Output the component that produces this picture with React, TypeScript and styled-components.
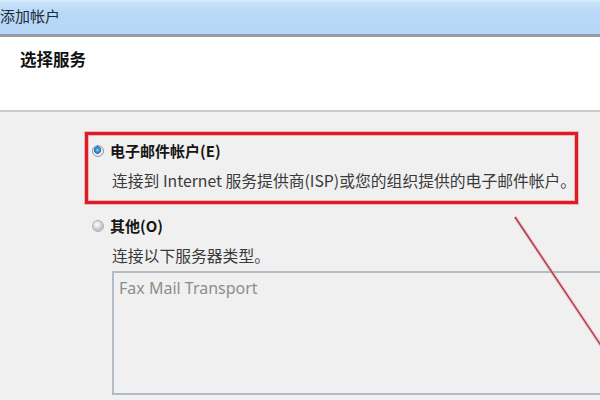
import styled, { createGlobalStyle } from "styled-components";

const CJK = `"Noto Sans CJK SC", "Noto Sans", sans-serif`;

const GlobalStyle = createGlobalStyle`
  html, body {
    margin: 0;
    padding: 0;
    width: 600px;
    height: 400px;
    overflow: hidden;
    background: #f0f0f0;
  }
`;

interface OptionProps {
  label: string;
  description: string;
  checked?: boolean;
  highlighted?: boolean;
  children?: React.ReactNode;
}

const Option = ({ label, description, checked, highlighted, children }: OptionProps) => (
  <OptionGroup $highlighted={highlighted}>
    <RadioRow>
      <Radio $checked={checked} />
      <OptionLabel>{label}</OptionLabel>
    </RadioRow>
    <Description>{description}</Description>
    {children}
  </OptionGroup>
);

const App = () => (
  <>
    <GlobalStyle />
    <Window>
      <TitleBar>
        <Title>添加帐户</Title>
      </TitleBar>
      <Header>
        <Heading>选择服务</Heading>
      </Header>
      <Body>
        <Option
          checked
          highlighted
          label="电子邮件帐户(E)"
          description="连接到 Internet 服务提供商(ISP)或您的组织提供的电子邮件帐户。"
        />
        <Option label="其他(O)" description="连接以下服务器类型。">
          <ListBox>
            <ListItem>Fax Mail Transport</ListItem>
          </ListBox>
        </Option>
      </Body>
      <Annotation width="600" height="400" viewBox="0 0 600 400">
        <line x1="515" y1="217" x2="602" y2="347" stroke="#f4a0a8" strokeWidth="3.5" opacity="0.5" />
        <line x1="515" y1="217" x2="602" y2="347" stroke="#a8404c" strokeWidth="1.5" />
      </Annotation>
    </Window>
  </>
);

export default App;

const Window = styled.div`
  position: relative;
  width: 600px;
  height: 400px;
  overflow: hidden;
  display: flex;
  flex-direction: column;
  background: #f0f0f0;
`;

const TitleBar = styled.div`
  height: 34px;
  flex-shrink: 0;
  display: flex;
  align-items: center;
  background: linear-gradient(180deg, #dbeffc 0px, #c6e2fa 3px, #b9d9f8 12px, #b6d7f8 100%);
  border-bottom: 3px solid #959ba2;
`;

const Title = styled.span`
  margin-left: 0;
  margin-top: -4px;
  font-family: ${CJK};
  font-size: 15px;
  color: #1e2a36;
`;

const Header = styled.div`
  height: 75px;
  flex-shrink: 0;
  background: #ffffff;
  border-bottom: 2px solid #cbcbcb;
  padding: 10px 0 0 20px;
  box-sizing: border-box;
`;

const Heading = styled.h1`
  margin: 0;
  font-family: ${CJK};
  font-size: 16.5px;
  line-height: 24px;
  font-weight: 700;
  color: #111;
`;

const Body = styled.div`
  flex: 1;
  display: flex;
  flex-direction: column;
  gap: 3px;
  padding: 20px 0 0 85px;
`;

const OptionGroup = styled.div<{ $highlighted?: boolean }>`
  width: 493px;
  box-sizing: border-box;
  display: flex;
  flex-direction: column;
  padding: 6px 8px 10px 3px;
  border: 3px solid ${({ $highlighted }) => ($highlighted ? "#dc1c26" : "transparent")};
  box-shadow: ${({ $highlighted }) =>
    $highlighted ? "0 0 0 1px rgba(240, 130, 135, 0.55), inset 0 0 0 1px rgba(240, 130, 135, 0.55)" : "none"};
`;

const RadioRow = styled.div`
  display: flex;
  align-items: center;
  gap: 6px;
  height: 20px;
`;

const Radio = styled.span<{ $checked?: boolean }>`
  width: 12px;
  height: 12px;
  border-radius: 50%;
  box-sizing: border-box;
  margin-left: 1px;
  border: 1px solid ${({ $checked }) => ($checked ? "#8e9aa6" : "#adadad")};
  background: ${({ $checked }) =>
    $checked
      ? "radial-gradient(circle at 45% 40%, #8fd0f5 0px, #2f86c8 2.5px, #2a6fae 3.5px, #e6eef4 4px)"
      : "radial-gradient(circle at 40% 35%, #ffffff 0px, #e0e0e0 3px, #c8c8c8 5px)"};
`;

const OptionLabel = styled.span`
  font-family: ${CJK};
  font-size: 15px;
  font-weight: 700;
  line-height: 20px;
  color: #151515;
`;

const Description = styled.div`
  margin: 10px 0 0 21px;
  font-family: ${CJK};
  font-size: 15.8px;
  line-height: 20px;
  color: #3a3a3a;
  white-space: nowrap;
`;

const ListBox = styled.div`
  margin: 5px 0 0 21px;
  width: 520px;
  height: 124px;
  flex-shrink: 0;
  box-sizing: border-box;
  border: 2px solid #b3bcc6;
  border-right: none;
  padding: 5px 0 0 5px;
  background: #f0f0f0;
`;

const ListItem = styled.div`
  font-family: "Noto Sans", "Open Sans", sans-serif;
  font-size: 16px;
  line-height: 20px;
  color: #8d8d8d;
`;

const Annotation = styled.svg`
  position: absolute;
  left: 0;
  top: 0;
  pointer-events: none;
`;
